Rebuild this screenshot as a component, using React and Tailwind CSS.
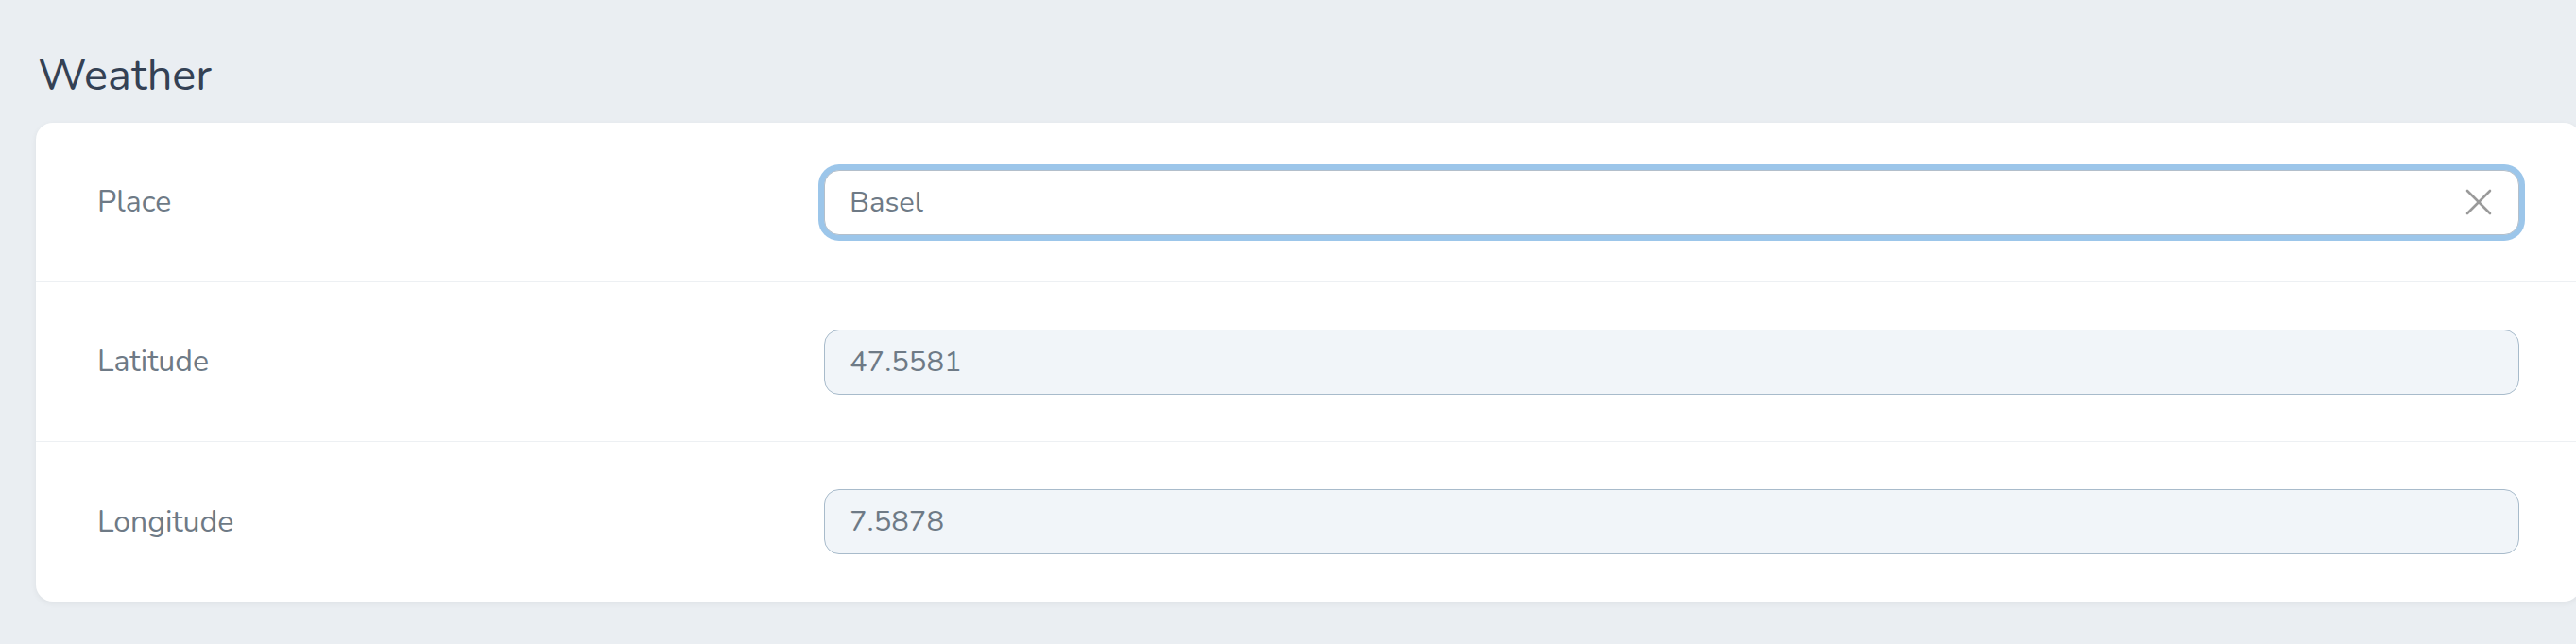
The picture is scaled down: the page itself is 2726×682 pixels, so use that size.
import { X } from 'lucide-react';

const font = { fontFamily: '"Nunito", "Lato", "Noto Sans", sans-serif' };

function Field({ label, value, focused, last }) {
  return (
    <div className={`flex items-center h-[169px] pl-[65px] pr-[65px] ${last ? '' : 'border-b-[1.5px] border-[#edf0f3]'}`}>
      <div className="w-[769px] shrink-0 text-[32px] text-[#6e7a86]">{label}</div>
      {focused ? (
        <div className="flex-1 flex items-center h-[69px] rounded-[16px] border-[1.5px] border-[#b3bfcb] bg-white shadow-[0_0_0_6px_#9cc6ea] pl-[26px] pr-[18px]">
          <span className="flex-1 text-[31px] text-[#6e7a86]">{value}</span>
          <X size={48} strokeWidth={1.3} className="text-[#9a9a9a]" />
        </div>
      ) : (
        <div className="flex-1 flex items-center h-[69px] rounded-[16px] border-[1.5px] border-[#a8bbcb] bg-[#f1f5f9] pl-[26px]">
          <span className="text-[31px] text-[#6e7a86]">{value}</span>
        </div>
      )}
    </div>
  );
}

export default function App() {
  return (
    <div className="w-[2726px] h-[682px] overflow-hidden bg-[#eaeef2]" style={font}>
      <div className="pl-[38px]">
        <h1 className="h-[130px] flex items-end pb-[27px] pl-[2px] text-[47px] leading-none text-[#344154]">Weather</h1>
        <div className="w-[2693px] bg-white rounded-[18px] shadow-[0_2px_6px_rgba(0,0,0,0.06)]">
          <Field label="Place" value="Basel" focused />
          <Field label="Latitude" value="47.5581" />
          <Field label="Longitude" value="7.5878" last />
        </div>
      </div>
    </div>
  );
}
